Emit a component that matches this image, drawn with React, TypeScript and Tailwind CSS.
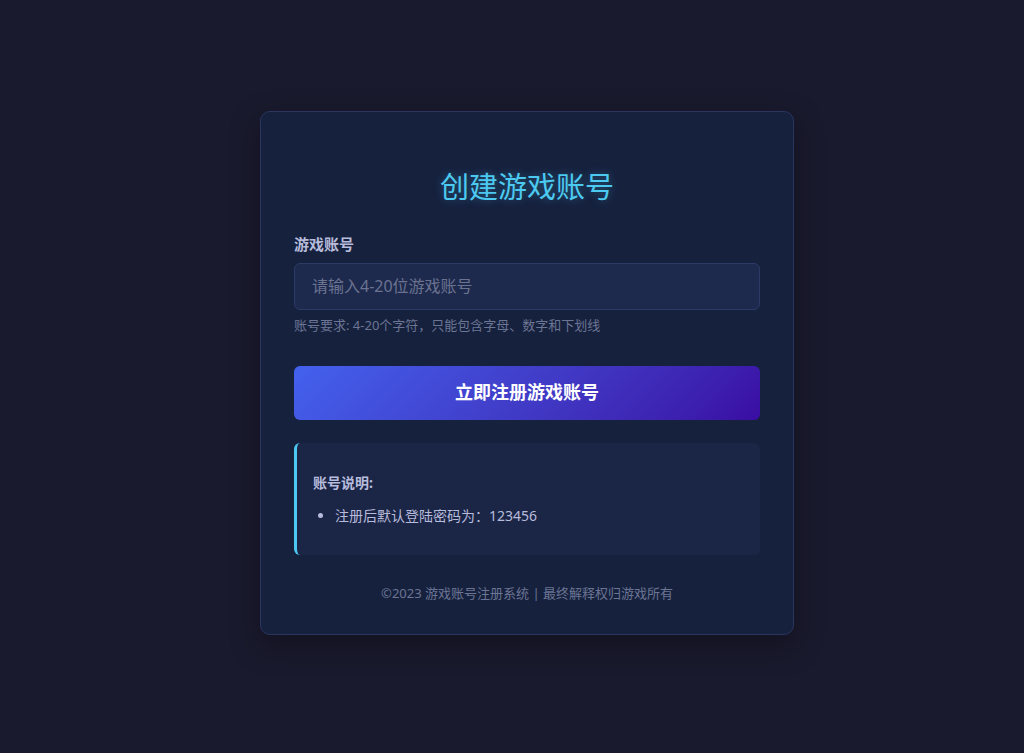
export default function App() {
  return (
    <div
      className="flex min-h-screen items-center justify-center bg-[#1a1a2e] pl-[30px]"
      style={{ fontFamily: '"Noto Sans", "Noto Sans CJK SC", sans-serif' }}
    >
      <div className="-mt-[8px] w-[534px] rounded-[10px] border border-[#2a3560] bg-[#16213e] px-[33px] pb-[31px] pt-[57px] shadow-[0_10px_30px_rgba(0,0,0,0.35)]">
        <h1 className="text-center text-[29px] font-normal leading-[36px] text-[#4cc9f0] [text-shadow:0_0_8px_rgba(76,201,240,0.35)]">
          创建游戏账号
        </h1>

        <div className="mt-[28px]">
          <label className="block text-[15px] font-bold leading-[22px] text-[#b8bcdc]">游戏账号</label>
          <input
            type="text"
            placeholder="请输入4-20位游戏账号"
            className="mt-[8px] h-[47px] w-full rounded-[6px] border border-[#2c3a66] bg-[#1e2a4d] px-[17px] text-[16px] text-[#e2e8f0] outline-none placeholder:text-[#6b7391]"
          />
          <p className="mt-[6px] text-[13px] leading-[18px] text-[#6c7594]">
            账号要求: 4-20个字符，只能包含字母、数字和下划线
          </p>
        </div>

        <button className="mt-[32px] h-[54px] w-full rounded-[6px] bg-linear-135 from-[#4361ee] to-[#3a0ca3] text-[18px] font-bold text-white">
          立即注册游戏账号
        </button>

        <div className="mt-[23px] rounded-[6px] border-l-[3px] border-[#4cc9f0] bg-[#1b2546] pb-[28px] pl-[16px] pr-4 pt-[30px]">
          <h4 className="text-[14px] font-bold leading-[20px] text-[#b8bcdc]">账号说明:</h4>
          <ul className="mt-[12px] list-disc pl-[22px] text-[14px] leading-[22px] text-[#b8bcdc] marker:text-[#b8bcdc]">
            <li>注册后默认登陆密码为：123456</li>
          </ul>
        </div>

        <p className="mt-[28px] text-center text-[13px] leading-[20px] text-[#6c7594]">
          ©2023 游戏账号注册系统 | 最终解释权归游戏所有
        </p>
      </div>
    </div>
  )
}
